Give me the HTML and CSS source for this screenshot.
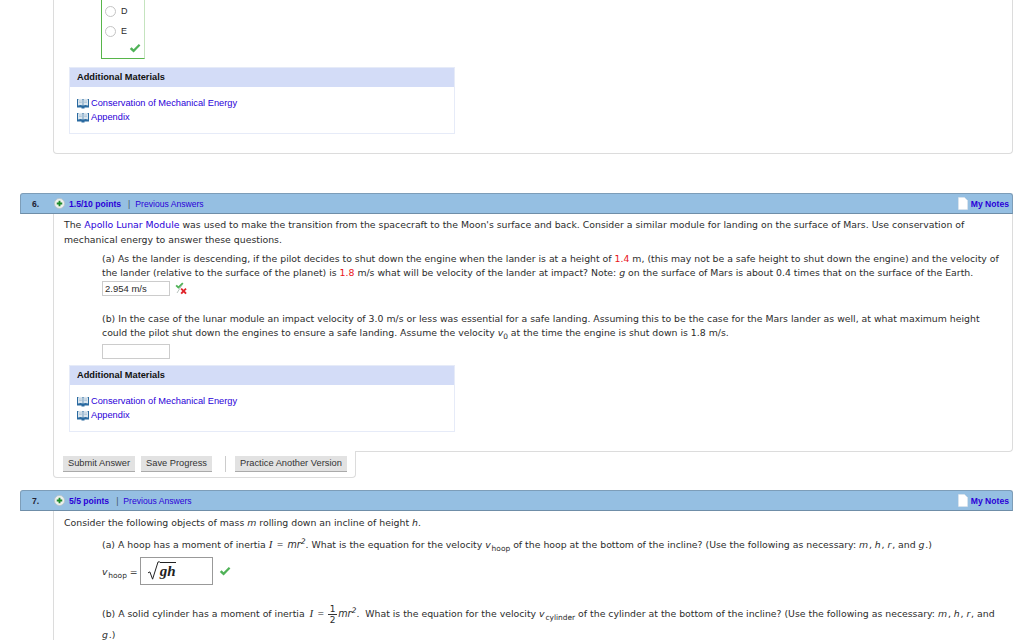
FILE: index.html
```html
<!DOCTYPE html>
<html lang="en">

<head>
    <meta charset="UTF-8">
    <title>Assignment</title>
    <link rel="stylesheet" href="styles.css">
</head>

<body>
    <svg class="svg-defs" width="0" height="0">
        <symbol id="book" viewBox="0 0 12 11">
            <path d="M0 1h12v8.500H7.500v1h-3v-1H0z" fill="#2a6aa0"/>
            <path d="M1 1.500C2.500 .6 4.500 .6 5.700 1.500V7.500C4.500 6.800 2.500 6.800 1 7.500zM6.300 1.500C7.500 .6 9.500 .6 11 1.500V7.500C9.500 6.800 7.500 6.800 6.300 7.500z" fill="#dbe6ee"/>
            <path d="M2 3h2.800M2 4.500h2.800M7.200 3H10M7.200 4.500H10" stroke="#9db7cc" stroke-width=".6"/>
        </symbol>
        <symbol id="check" viewBox="0 0 12 11">
            <path d="M.8 6 2.600 4.300 4.600 6.300 9.800 1 11.400 2.500 4.600 9.600z" fill="#4fb257"/>
        </symbol>
        <symbol id="plus" viewBox="0 0 12 12">
            <circle cx="6" cy="6" r="5.500" fill="#eef1ee" stroke="#b8c4cc"/>
            <path d="M5 3h2v2h2v2H7v2H5V7H3V5h2z" fill="#1c8a2a"/>
        </symbol>
        <symbol id="note" viewBox="0 0 10 13">
            <path d="M.5 .5h6l3 3v9h-9z" fill="#fff" stroke="#dfe6ec" stroke-width=".6"/>
        </symbol>
    </svg>

    <div class="prev-card">
        <div class="choices">
            <div class="choice"><span class="radio"></span>D</div>
            <div class="choice"><span class="radio"></span>E</div>
            <svg class="choices-check"><use href="#check"/></svg>
        </div>
        <div class="materials materials-first">
            <div class="materials-title">Additional Materials</div>
            <div class="materials-list">
                <a class="material"><svg class="book"><use href="#book"/></svg>Conservation of Mechanical Energy</a>
                <a class="material"><svg class="book"><use href="#book"/></svg>Appendix</a>
            </div>
        </div>
    </div>

    <div class="question q6">
        <div class="q-header">
            <span class="q-num">6.</span>
            <svg class="plus"><use href="#plus"/></svg>
            <a class="points">1.5/10 points</a>
            <span class="sep">|</span>
            <a class="prev">Previous Answers</a>
            <a class="notes"><svg class="note"><use href="#note"/></svg>My Notes</a>
        </div>
        <div class="q-body q-body-closed">
            <p class="intro">The <a class="link">Apollo Lunar Module</a> was used to make the transition from the spacecraft to the Moon's surface and back. Consider a similar module for landing on the surface of Mars. Use conservation of mechanical energy to answer these questions.</p>
            <div class="part part-a">
                <p>(a) As the lander is descending, if the pilot decides to shut down the engine when the lander is at a height of <span class="red">1.4</span> m, (this may not be a safe height to shut down the engine) and the velocity of the lander (relative to the surface of the planet) is <span class="red">1.8</span> m/s what will be velocity of the lander at impact? Note: <i>g</i> on the surface of Mars is about 0.4 times that on the surface of the Earth.</p>
                <div class="answer-row">
                    <span class="answer">2.954 m/s</span>
                    <svg class="partial" viewBox="0 0 12 13">
                        <path d="M.5 4 1.800 2.700 3.400 4.300 7.200 .5 8.500 1.700 3.400 6.800z" fill="#4fb257"/>
                        <path d="M5.500 7.300 6.800 6 8.600 7.800 10.400 6 11.700 7.300 9.900 9.100 11.700 10.900 10.400 12.200 8.600 10.400 6.800 12.200 5.500 10.900 7.300 9.100z" fill="#e0262c"/>
                        <path d="M2 11 7 3" stroke="#9aa7a0" stroke-width=".7"/>
                    </svg>
                </div>
            </div>
            <div class="part part-b">
                <p>(b) In the case of the lunar module an impact velocity of 3.0 m/s or less was essential for a safe landing. Assuming this to be the case for the Mars lander as well, at what maximum height could the pilot shut down the engines to ensure a safe landing. Assume the velocity <i>v</i><sub>0</sub> at the time the engine is shut down is 1.8 m/s.</p>
                <div class="answer-row"><span class="answer"></span></div>
            </div>
            <div class="materials">
                <div class="materials-title">Additional Materials</div>
                <div class="materials-list">
                    <a class="material"><svg class="book"><use href="#book"/></svg>Conservation of Mechanical Energy</a>
                    <a class="material"><svg class="book"><use href="#book"/></svg>Appendix</a>
                </div>
            </div>
        </div>
        <div class="actions-tab">
            <span class="btn">Submit Answer</span>
            <span class="btn">Save Progress</span>
            <span class="btn-sep"></span>
            <span class="btn">Practice Another Version</span>
        </div>
    </div>

    <div class="question q7">
        <div class="q-header">
            <span class="q-num">7.</span>
            <svg class="plus"><use href="#plus"/></svg>
            <a class="points">5/5 points</a>
            <span class="sep">|</span>
            <a class="prev">Previous Answers</a>
            <a class="notes"><svg class="note"><use href="#note"/></svg>My Notes</a>
        </div>
        <div class="q-body">
            <p class="intro">Consider the following objects of mass <i>m</i> rolling down an incline of height <i>h</i>.</p>
            <div class="part part-hoop">
                <p>(a) A hoop has a moment of inertia <span class="math">I = <span class="mr">mr<sup>2</sup></span></span>. What is the equation for the velocity <i>v</i><sub>hoop</sub> of the hoop at the bottom of the incline? (Use the following as necessary: <i>m</i>, <i>h</i>, <i>r</i>, and <i>g</i>.)</p>
                <div class="math-row">
                    <span class="math-label"><i>v</i><sub>hoop</sub> =</span>
                    <span class="math-box">
                        <svg class="radical" viewBox="0 0 14 22"><path d="M1 13l2-1 3 8L12 1h2" fill="none" stroke="#222" stroke-width="1.100"/></svg>
                        <span class="radicand">gh</span>
                    </span>
                    <svg class="math-check"><use href="#check"/></svg>
                </div>
            </div>
            <div class="part part-cyl">
                <p>(b) A solid cylinder has a moment of inertia <span class="math math-wide">I = <span class="frac"><span>1</span><span>2</span></span><span class="mr">mr<sup>2</sup></span></span>. &nbsp;What is the equation for the velocity <i>v</i><sub>cylinder</sub> of the cylinder at the bottom of the incline? (Use the following as necessary: <i>m</i>, <i>h</i>, <i>r</i>, and <i>g</i>.)</p>
            </div>
        </div>
    </div>
</body>

</html>
```
FILE: styles.css
```css
html, body {
    height: 640px;
    overflow: hidden;
}

body {
    margin: 0;
    padding: 0 11px 0 20px;
    background: #fff;
    font-family: "DejaVu Sans", sans-serif;
    font-size: 9.33px;
    color: #2c2c2c;
}

p {
    margin: 0;
}

sub, sup {
    font-size: 80%;
    line-height: 0;
}

.svg-defs {
    position: absolute;
}

/* tail of the question above */
.prev-card {
    margin-left: 33px;
    height: 154px;
    box-sizing: border-box;
    border: 1px solid #dcdcdc;
    border-top: 0;
    border-radius: 0 0 4px 4px;
    padding-left: 15px;
}

.choices {
    position: relative;
    box-sizing: border-box;
    width: 44px;
    height: 59px;
    margin-left: 32px;
    border: 1px solid #57b54a;
    border-top: 0;
    border-right-color: #c5e4bf;
    padding-top: 1px;
    font-family: "Liberation Sans", sans-serif;
    font-size: 9px;
}

.choice {
    display: flex;
    align-items: center;
    gap: 5px;
    height: 20px;
    padding-left: 3px;
}

.radio {
    width: 9px;
    height: 9px;
    border: 1px solid #c4c4c4;
    border-radius: 50%;
}

.choices-check {
    position: absolute;
    right: 3px;
    bottom: 4px;
    width: 12px;
    height: 11px;
}

.materials {
    width: 386px;
    height: 67px;
    box-sizing: border-box;
    border: 1px solid #e6ebf8;
    margin-top: 8px;
    font-family: "Liberation Sans", sans-serif;
    font-size: 9.25px;
}

.materials-title {
    height: 19px;
    line-height: 19px;
    padding-left: 7px;
    background: #d3dcf7;
    color: #111;
    font-weight: bold;
}

.materials-list {
    padding: 9px 0 0 7px;
}

.material {
    display: flex;
    align-items: center;
    height: 14px;
    color: #2a00d8;
}

.book {
    width: 12px;
    height: 11px;
    margin-right: 2px;
}

/* question blocks */
.q6 {
    margin-top: 39px;
}

.q7 {
    margin-top: 12px;
}

.q-header {
    display: flex;
    align-items: center;
    height: 21px;
    box-sizing: border-box;
    border: 1px solid #7d9db8;
    border-bottom-color: #6f8ea8;
    border-radius: 3px 3px 0 0;
    background: #95bfe2;
    font-family: "Liberation Sans", sans-serif;
    font-size: 8.6px;
    color: #2a00d8;
}

.q-num {
    width: 33px;
    padding-left: 11px;
    box-sizing: border-box;
    color: #223;
    font-weight: bold;
}

.plus {
    width: 11px;
    height: 11px;
    margin: 0 4px 0 0;
}

.points {
    font-weight: bold;
}

.sep {
    margin: 0 5px 0 7px;
    color: #456;
}

.notes {
    display: flex;
    align-items: center;
    margin-left: auto;
    padding-right: 3px;
    font-weight: bold;
}

.note {
    width: 10px;
    height: 13px;
    margin-right: 3px;
}

.q-body {
    margin-left: 33px;
    border-left: 1px solid #dcdcdc;
    border-right: 1px solid #dcdcdc;
    padding: 3px 13px 0 10px;
    line-height: 15px;
}

.q-body-closed {
    border-bottom: 1px solid #dcdcdc;
    border-radius: 0 0 4px 0;
    padding-bottom: 19px;
}

.q7 .q-body {
    border-right: 0;
    padding-top: 4px;
}

.link {
    color: #2a00d8;
}

.red {
    color: #e8141a;
}

.part {
    margin-left: 38px;
    line-height: 14px;
}

.part-a {
    margin-top: 5px;
}

.part-b {
    margin-top: 16px;
}

.answer-row {
    display: flex;
    align-items: center;
    gap: 5px;
    margin-top: 1px;
}

.part-b .answer-row {
    margin-top: 4px;
}

.answer {
    width: 68px;
    height: 15px;
    box-sizing: border-box;
    border: 1px solid #ccc;
    padding-left: 2px;
    font-family: "Liberation Sans", sans-serif;
    font-size: 9.5px;
    line-height: 13px;
}

.partial {
    width: 12px;
    height: 13px;
}

.q-body .materials {
    margin: 6px 0 0 5px;
}

/* bottom tab with the buttons, sits over the card's bottom line */
.actions-tab {
    position: relative;
    display: flex;
    align-items: center;
    gap: 6px;
    box-sizing: border-box;
    width: 303px;
    height: 27px;
    margin: -1px 0 0 33px;
    border: 1px solid #dcdcdc;
    border-top: 0;
    border-radius: 0 0 4px 4px;
    padding: 0 0 1px 9px;
    background: #fff;
}

.btn {
    height: 15px;
    padding: 0 5px;
    background: #e2e2e2;
    border-bottom: 1px solid #aaa;
    font-family: "Liberation Sans", sans-serif;
    font-size: 9.3px;
    line-height: 15px;
    color: #333;
}

.btn-sep {
    width: 1px;
    height: 16px;
    margin: 0 3px 0 7px;
    background: #ccc;
}

/* math */
.math {
    font-family: "Liberation Serif", serif;
    font-style: italic;
    font-size: 11px;
    word-spacing: 1px;
}

.mr {
    font-family: "DejaVu Sans", sans-serif;
    font-size: 9.6px;
}

.math-wide {
    margin-left: 2px;
}

.part-hoop {
    margin-top: 7px;
    line-height: 15px;
}

.part-hoop i, .part-cyl i {
    margin-right: .8px;
}

.math-row {
    display: flex;
    align-items: center;
    margin-top: 5px;
}

.math-label {
    margin-right: 2px;
}

.math-box {
    display: flex;
    align-items: center;
    box-sizing: border-box;
    width: 73px;
    height: 28px;
    border: 1px solid #999;
    padding-left: 6px;
}

.radical {
    width: 13px;
    height: 20px;
}

.radicand {
    border-top: 1px solid #222;
    font-family: "Liberation Serif", serif;
    font-style: italic;
    font-weight: bold;
    font-size: 15px;
    line-height: 17px;
    color: #222;
}

.math-check {
    width: 12px;
    height: 11px;
    margin-left: 6px;
}

.part-cyl {
    margin-top: 18px;
    line-height: 20px;
}

.frac {
    display: inline-flex;
    flex-direction: column;
    width: 9px;
    margin-right: 1px;
    vertical-align: middle;
    font-family: "DejaVu Sans", sans-serif;
    font-style: normal;
    font-size: 9px;
    line-height: 10px;
    text-align: center;
}

.frac span:first-child {
    border-bottom: 1px solid #333;
}
```
